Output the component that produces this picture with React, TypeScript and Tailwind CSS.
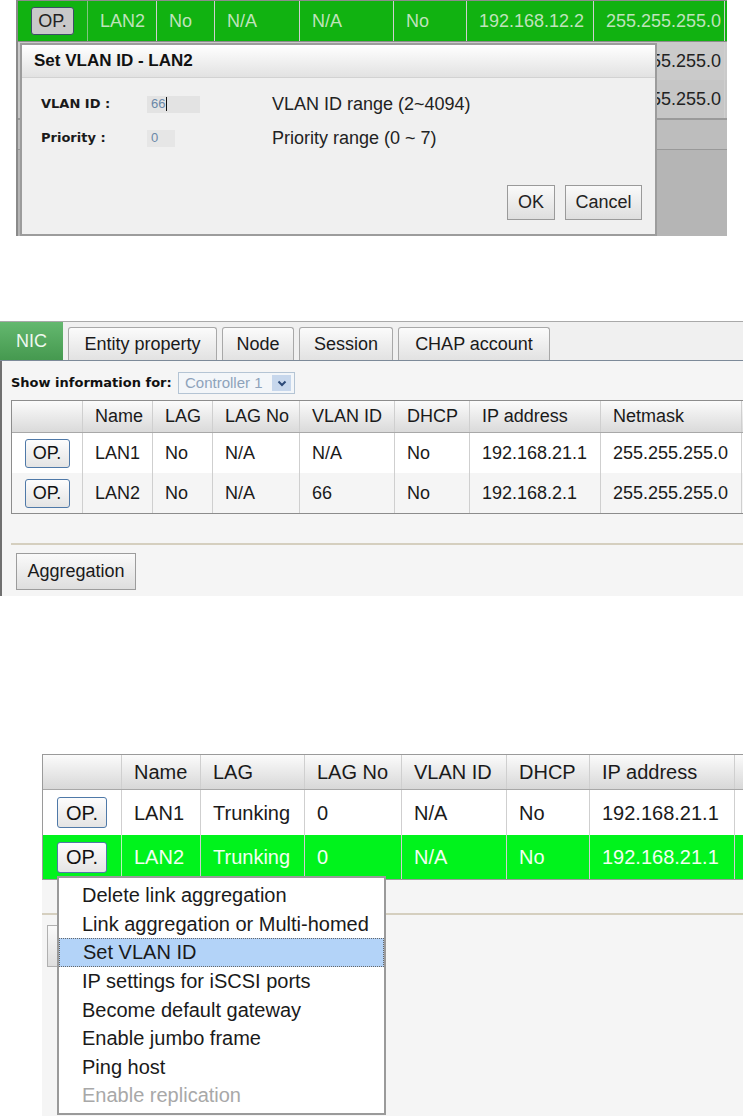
import React from "react";

const s1Cols = "grid-cols-[70px_69px_58px_85px_94px_73px_127px_131px]";
const s2Cols = "grid-cols-[71px_70px_60px_87px_95px_75px_131px_141px_20px]";
const s3Cols = "grid-cols-[79px_79px_104px_97px_105px_83px_145px_40px]";

const OpButton = ({ className }: { className: string }) => (
  <div
    className={`flex items-center justify-center rounded-[3px] border border-[#4f79a8] bg-linear-to-b from-[#fdfdfd] to-[#e4e4e4] text-[#111] ${className}`}
  >
    OP.
  </div>
);

const Cell = ({ children, className = "" }: { children?: React.ReactNode; className?: string }) => (
  <div className={`flex items-center border-r border-[#cfcfcf] pl-[12px] whitespace-nowrap ${className}`}>{children}</div>
);

const menuItems = [
  "Delete link aggregation",
  "Link aggregation or Multi-homed",
  "Set VLAN ID",
  "IP settings for iSCSI ports",
  "Become default gateway",
  "Enable jumbo frame",
  "Ping host",
  "Enable replication",
];

const VlanDialogShot = () => (
  <div className="relative h-[240px]">
    <div className="ml-[16px] flex h-[236px] w-[711px] flex-col border-l-2 border-[#8a8a8a] bg-[#b5b5b5]">
      <div className={`grid h-[42px] ${s1Cols} border-y border-[#8c8c8c] bg-[#11b211] text-[18px] text-[#bfe3bb]`}>
        <div className="flex items-center justify-center border-r border-[#7fc47f]">
          <div className="flex h-[28px] w-[43px] items-center justify-center rounded-[3px] border border-[#3c4f66] bg-[#c9c9c9] text-[#222]">
            OP.
          </div>
        </div>
        <Cell className="border-[#7fc47f]">LAN2</Cell>
        <Cell className="border-[#7fc47f]">No</Cell>
        <Cell className="border-[#7fc47f]">N/A</Cell>
        <Cell className="border-[#7fc47f]">N/A</Cell>
        <Cell className="border-[#7fc47f]">No</Cell>
        <Cell className="border-[#7fc47f]">192.168.12.2</Cell>
        <Cell className="border-0">255.255.255.0</Cell>
      </div>
      <div className={`grid h-[38px] ${s1Cols} bg-[#cacaca] text-[18px] text-[#222]`}>
        <div className="col-span-7" />
        <Cell className="border-0">255.255.255.0</Cell>
      </div>
      <div className={`grid h-[40px] ${s1Cols} border-b-2 border-[#9a9a9a] bg-[#c6c6c6] text-[18px] text-[#222]`}>
        <div className="col-span-7" />
        <Cell className="border-0">255.255.255.0</Cell>
      </div>
      <div className="h-[30px] border-b border-[#999] bg-[#bdbdbd]" />
    </div>

    <div className="absolute left-[20px] top-[43px] flex h-[193px] w-[637px] flex-col border-2 border-[#9c9c9c] bg-[#f0f0f0]">
      <div className="flex h-[33px] items-center border-b border-[#d2d2d2] bg-linear-to-b from-[#ffffff] to-[#e2e2e2] pl-[12px] text-[17px] font-bold text-[#111]">
        Set VLAN ID - LAN2
      </div>
      <div className="flex flex-1 flex-col pl-[19px] pr-[13px]">
        <div className="mt-[16px] flex h-[20px] items-center">
          <span className="w-[106px] font-['DejaVu_Sans',Verdana,sans-serif] text-[13px] font-bold text-[#1a1a1a]">VLAN ID :</span>
          <span className="flex h-[17px] w-[53px] items-center bg-[#e3e3e3] pl-[4px] text-[13px] text-[#6a88a8]">
            66<span className="ml-[1px] h-[14px] w-px bg-[#111]" />
          </span>
          <span className="ml-[72px] text-[18px] text-[#222]">VLAN ID range (2~4094)</span>
        </div>
        <div className="mt-[14px] flex h-[20px] items-center">
          <span className="w-[106px] font-['DejaVu_Sans',Verdana,sans-serif] text-[13px] font-bold text-[#1a1a1a]">Priority :</span>
          <span className="flex h-[17px] w-[28px] items-center bg-[#e6e6e6] pl-[4px] text-[13px] text-[#6a88a8]">0</span>
          <span className="ml-[97px] text-[18px] text-[#222]">Priority range (0 ~ 7)</span>
        </div>
        <div className="mt-auto mb-[14px] flex justify-end gap-[10px] text-[18px] text-[#222]">
          <div className="flex h-[35px] w-[48px] items-center justify-center border border-[#9a9a9a] bg-linear-to-b from-[#fafafa] to-[#dedede]">
            OK
          </div>
          <div className="flex h-[35px] w-[77px] items-center justify-center border border-[#9a9a9a] bg-linear-to-b from-[#fafafa] to-[#dedede]">
            Cancel
          </div>
        </div>
      </div>
    </div>
  </div>
);

const NicPanelShot = () => {
  const tabs = [
    { label: "Entity property", w: "w-[149px]" },
    { label: "Node", w: "w-[72px]" },
    { label: "Session", w: "w-[94px]" },
    { label: "CHAP account", w: "w-[152px]" },
  ];
  const rows = [
    { name: "LAN1", vlan: "N/A", ip: "192.168.21.1", bg: "bg-white" },
    { name: "LAN2", vlan: "66", ip: "192.168.2.1", bg: "bg-[#f5f5f5]" },
  ];
  return (
    <div className="mt-[81px] border-t border-[#a9a9a9] text-[18px] text-[#1a1a1a]">
      <div className="flex h-[39px] items-end gap-[5px] border-b border-[#7d8a99] bg-[#f0f0f0]">
        <div className="flex h-[38px] w-[63px] items-center justify-center bg-linear-to-b from-[#64b86f] to-[#45994f] text-[#eef8ee]">
          NIC
        </div>
        {tabs.map((t) => (
          <div
            key={t.label}
            className={`flex h-[33px] ${t.w} items-center justify-center rounded-t-[3px] border border-b-0 border-[#a8a8a8] bg-linear-to-b from-[#fbfbfb] to-[#e2e2e2]`}
          >
            {t.label}
          </div>
        ))}
      </div>
      <div className="flex h-[235px] flex-col border-l-2 border-[#707070] bg-[#f5f5f5] pt-[11px]">
        <div className="flex h-[22px] items-center pl-[9px]">
          <span className="w-[167px] font-['DejaVu_Sans',Verdana,sans-serif] text-[13px] font-bold text-[#111]">Show information for:</span>
          <div className="flex h-[22px] w-[117px] items-center justify-between border border-[#b4c4d4] bg-[#f3f6f9] pl-[6px] pr-[3px]">
            <span className="text-[15px] text-[#8ea3bb]">Controller 1</span>
            <span className="flex h-[16px] w-[19px] items-center justify-center bg-[#c7d7ec]">
              <svg width="10" height="7" viewBox="0 0 10 7">
                <path d="M1.5 1.5 L5 5 L8.5 1.5" fill="none" stroke="#2c4a78" strokeWidth="2" />
              </svg>
            </span>
          </div>
        </div>
        <div className="ml-[9px] mt-[6px] w-[732px] overflow-hidden border-y border-l border-[#8c8c8c]">
          <div className={`grid h-[32px] ${s2Cols} border-b border-[#a8a8a8] bg-linear-to-b from-[#fbfbfb] to-[#dadada]`}>
            <Cell />
            <Cell>Name</Cell>
            <Cell>LAG</Cell>
            <Cell>LAG No</Cell>
            <Cell>VLAN ID</Cell>
            <Cell>DHCP</Cell>
            <Cell>IP address</Cell>
            <Cell>Netmask</Cell>
            <Cell />
          </div>
          {rows.map((r) => (
            <div key={r.name} className={`grid h-[40px] ${s2Cols} ${r.bg}`}>
              <div className="flex items-center justify-center border-r border-[#cfcfcf]">
                <OpButton className="h-[29px] w-[45px]" />
              </div>
              <Cell>{r.name}</Cell>
              <Cell>No</Cell>
              <Cell>N/A</Cell>
              <Cell>{r.vlan}</Cell>
              <Cell>No</Cell>
              <Cell>{r.ip}</Cell>
              <Cell>255.255.255.0</Cell>
              <Cell />
            </div>
          ))}
        </div>
        <div className="ml-[9px] mt-[29px] h-[2px] bg-[#d5cfbf]" />
        <div className="ml-[14px] mt-[8px] flex h-[37px] w-[120px] items-center justify-center border border-[#9c9c9c] bg-linear-to-b from-[#fafafa] to-[#dedede]">
          Aggregation
        </div>
      </div>
    </div>
  );
};

const MenuShot = () => (
  <div className="mt-[158px] text-[20px] text-[#1a1a1a]">
    <div className="ml-[42px] overflow-hidden border-y border-l border-[#9a9a9a]">
      <div className={`grid h-[35px] ${s3Cols} border-b border-[#a8a8a8] bg-linear-to-b from-[#fbfbfb] to-[#d8d8d8]`}>
        <Cell />
        <Cell>Name</Cell>
        <Cell>LAG</Cell>
        <Cell>LAG No</Cell>
        <Cell>VLAN ID</Cell>
        <Cell>DHCP</Cell>
        <Cell>IP address</Cell>
        <Cell />
      </div>
      <div className={`grid h-[45px] ${s3Cols} bg-white`}>
        <div className="flex items-center justify-center border-r border-[#cfcfcf]">
          <OpButton className="h-[31px] w-[50px]" />
        </div>
        <Cell>LAN1</Cell>
        <Cell>Trunking</Cell>
        <Cell>0</Cell>
        <Cell>N/A</Cell>
        <Cell>No</Cell>
        <Cell>192.168.21.1</Cell>
        <Cell />
      </div>
      <div className={`grid h-[44px] ${s3Cols} bg-[#00f31c] text-[#f2fff2]`}>
        <div className="flex items-center justify-center border-r border-[#b8f5b8]">
          <OpButton className="h-[31px] w-[50px]" />
        </div>
        <Cell className="border-[#b8f5b8]">LAN2</Cell>
        <Cell className="border-[#b8f5b8]">Trunking</Cell>
        <Cell className="border-[#b8f5b8]">0</Cell>
        <Cell className="border-[#b8f5b8]">N/A</Cell>
        <Cell className="border-[#b8f5b8]">No</Cell>
        <Cell className="border-[#b8f5b8]">192.168.21.1</Cell>
        <Cell className="border-[#b8f5b8]" />
      </div>
    </div>
    <div className="relative ml-[42px] h-[237px] bg-[#f5f5f5] pt-[33px]">
      <div className="h-[2px] bg-[#d5cfbf]" />
      <div className="ml-[5px] mt-[10px] h-[42px] w-[130px] border border-[#b0b0b0] bg-linear-to-b from-[#fafafa] to-[#dedede]" />
      <div className="absolute left-[15px] top-[-4px] w-[329px] border-2 border-[#9a9a9a] bg-white py-[3px]">
        {menuItems.map((item, i) => (
          <div
            key={item}
            className={`flex h-[28.6px] items-center pl-[23px] whitespace-nowrap ${
              i === 2 ? "border border-dotted border-[#666] bg-[#b3d3f8] pl-[22px]" : ""
            } ${i === 7 ? "text-[#a8a8a8]" : ""}`}
          >
            {item}
          </div>
        ))}
      </div>
    </div>
  </div>
);

export default function App() {
  return (
    <div className="h-[1116px] w-[743px] overflow-hidden bg-white font-['Liberation_Sans',Arial,sans-serif]">
      <VlanDialogShot />
      <NicPanelShot />
      <MenuShot />
    </div>
  );
}
